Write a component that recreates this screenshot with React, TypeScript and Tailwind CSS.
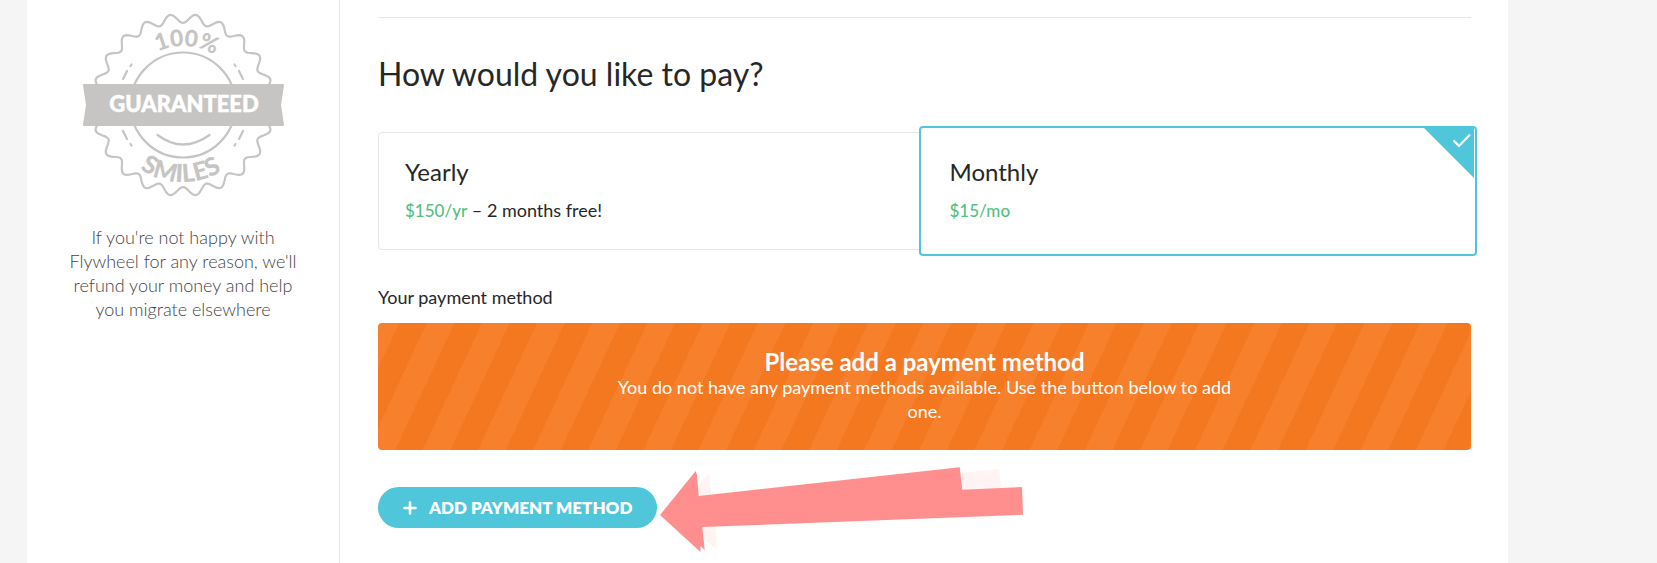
const SEAL_POINTS = 22;
const SEAL_X = 104;
const SEAL_Y = 95;

function sealOutline() {
  const steps = SEAL_POINTS * 16;
  const points: string[] = [];
  for (let i = 0; i < steps; i++) {
    const angle = (i / steps) * Math.PI * 2;
    const wave = Math.cos(angle * SEAL_POINTS);
    const radius = 86.5 + 4.5 * wave;
    const x = SEAL_X + radius * Math.cos(angle);
    const y = SEAL_Y + radius * Math.sin(angle);
    points.push(`${x.toFixed(2)} ${y.toFixed(2)}`);
  }
  return `M${points.join("L")}Z`;
}

function GuaranteeSeal() {
  return (
    <svg
      viewBox="0 0 208 190"
      className="h-[190px] w-[208px] font-['Lato',sans-serif] font-black"
      role="img"
      aria-label="100% Guaranteed Smiles"
    >
      <defs>
        <path id="seal-top" d="M45 95A59 59 0 0 1 163 95" />
        <path id="seal-bottom" d="M27 95A77 77 0 0 0 181 95" />
      </defs>
      <g fill="none" stroke="#c6c5c3" strokeWidth="2.2" strokeLinecap="round" strokeLinejoin="round">
        <path d={sealOutline()} />
        <circle cx="104" cy="95" r="52.5" />
        <path d="M78.500 125Q104 144 130.500 125" />
        <path d="M52.5 54.5l-1 1.5M48 61L44 69" />
        <path d="M155.500 54.500l1 1.500M160 61L164 69" />
        <path d="M52.5 135.5l-1 -1.500M48 129L44 121" />
        <path d="M155.500 135.500l1 -1.500M160 129L164 121" />
      </g>
      <path
        d="M5 75H204L201 95L204 115H5L8 95Z"
        fill="#c6c5c3"
        stroke="#c6c5c3"
        strokeWidth="2"
        strokeLinejoin="round"
      />
      <text fontSize="23" fill="#c6c5c3" textAnchor="middle">
        <textPath href="#seal-top" startOffset="52%">100%</textPath>
      </text>
      <text x="105" y="102" fontSize="22" fill="#fff" stroke="#fff" strokeWidth="0.5" textAnchor="middle">
        GUARANTEED
      </text>
      <text fontSize="25" fill="#c6c5c3" textAnchor="middle">
        <textPath href="#seal-bottom" startOffset="49%">SMILES</textPath>
      </text>
    </svg>
  );
}

function PointerArrow() {
  return (
    <svg viewBox="0 0 366 88" className="pointer-events-none absolute top-[-22px] left-full ml-[2px] h-[88px] w-[366px]" aria-hidden="true">
      <path
        d="M39 21L50 8.500L52.500 31L39 33ZM301 8L340 4L342 24L302 26ZM43 62L56 61L58 84L43 73Z"
        fill="#fff4f3"
      />
      <path
        d="M1 50L36.700 6L38 10L39.700 31L300.700 2.300L303.300 24.700L363 22L364 49.700L43.300 62L45.700 85L41.500 81L41.500 87Z"
        fill="#ff8e8e"
      />
    </svg>
  );
}

export default function App() {
  return (
    <div className="min-h-screen bg-[#f5f5f5] pr-[149px] pl-[27px] font-['Lato',sans-serif] text-lg leading-6 text-[#262727]">
      <div className="flex min-h-screen bg-white">
        <aside className="flex w-[313px] shrink-0 flex-col items-center border-r border-[#e6e6e6] px-8 pt-[10px]">
          <GuaranteeSeal />
          <p className="mt-[25px] text-center font-light text-[#444]">
            If you're not happy with Flywheel for any reason, we'll refund your money and help you migrate elsewhere
          </p>
        </aside>

        <main className="min-w-0 flex-1 pt-[17px] pr-[37px] pl-[38px]">
          <hr className="border-[#e6e6e6]" />
          <form>
            <fieldset>
              <legend className="pt-9 text-[32px] leading-10">How would you like to pay?</legend>
              <div className="mt-[38px] grid grid-cols-2">
                <label className="block rounded border border-[#e6e6e6] px-[26px] py-[25px]">
                  <input type="radio" name="plan" value="yearly" className="sr-only" />
                  <span className="block text-2xl leading-7">Yearly</span>
                  <span className="mt-3 block h-[26px]">
                    <span className="text-[17px] font-medium text-[#56bf81]">$150/yr</span> – 2 months free!
                  </span>
                </label>
                <label className="relative -m-[6px] block rounded border-2 border-[#50c6db] bg-white px-[29px] py-[30px]">
                  <input type="radio" name="plan" value="monthly" defaultChecked className="sr-only" />
                  <span className="block text-2xl leading-7">Monthly</span>
                  <span className="mt-3 block h-[26px]">
                    <span className="text-[17px] font-medium text-[#56bf81]">$15/mo</span>
                  </span>
                  <svg viewBox="0 0 50 50" className="absolute top-0 right-px h-[50px] w-[50px]" aria-hidden="true">
                    <path d="M0 0H50V50Z" fill="#50c6db" />
                    <path d="M29.500 12.500L35 18L46 6.500" fill="none" stroke="#fff" strokeWidth="2.200" />
                  </svg>
                </label>
              </div>
            </fieldset>

            <h2 className="mt-[35px]">Your payment method</h2>
            <div
              role="alert"
              className="mt-[14px] rounded bg-[repeating-linear-gradient(-65deg,#f47820_0px,#f47820_25px,#f6802b_25px,#f6802b_50px)] px-6 pt-[25px] pb-[27px] text-center text-white"
            >
              <h3 className="text-2xl leading-[27px] font-bold">Please add a payment method</h3>
              <p className="mx-auto max-w-[636px]">
                You do not have any payment methods available. Use the button below to add one.
              </p>
            </div>

            <div className="relative mt-[37px] w-fit">
              <button type="button" className="flex h-[41px] items-center gap-3 rounded-full bg-[#50c6db] px-[25px] text-[17px] font-extrabold text-white">
                <svg viewBox="0 0 14 14" className="size-[14px]" aria-hidden="true">
                  <path d="M7 1.500V12.500M1.500 7H12.500" stroke="#fff" strokeWidth="2.600" strokeLinecap="round" />
                </svg>
                ADD PAYMENT METHOD
              </button>
              <PointerArrow />
            </div>
          </form>
        </main>
      </div>
    </div>
  );
}
